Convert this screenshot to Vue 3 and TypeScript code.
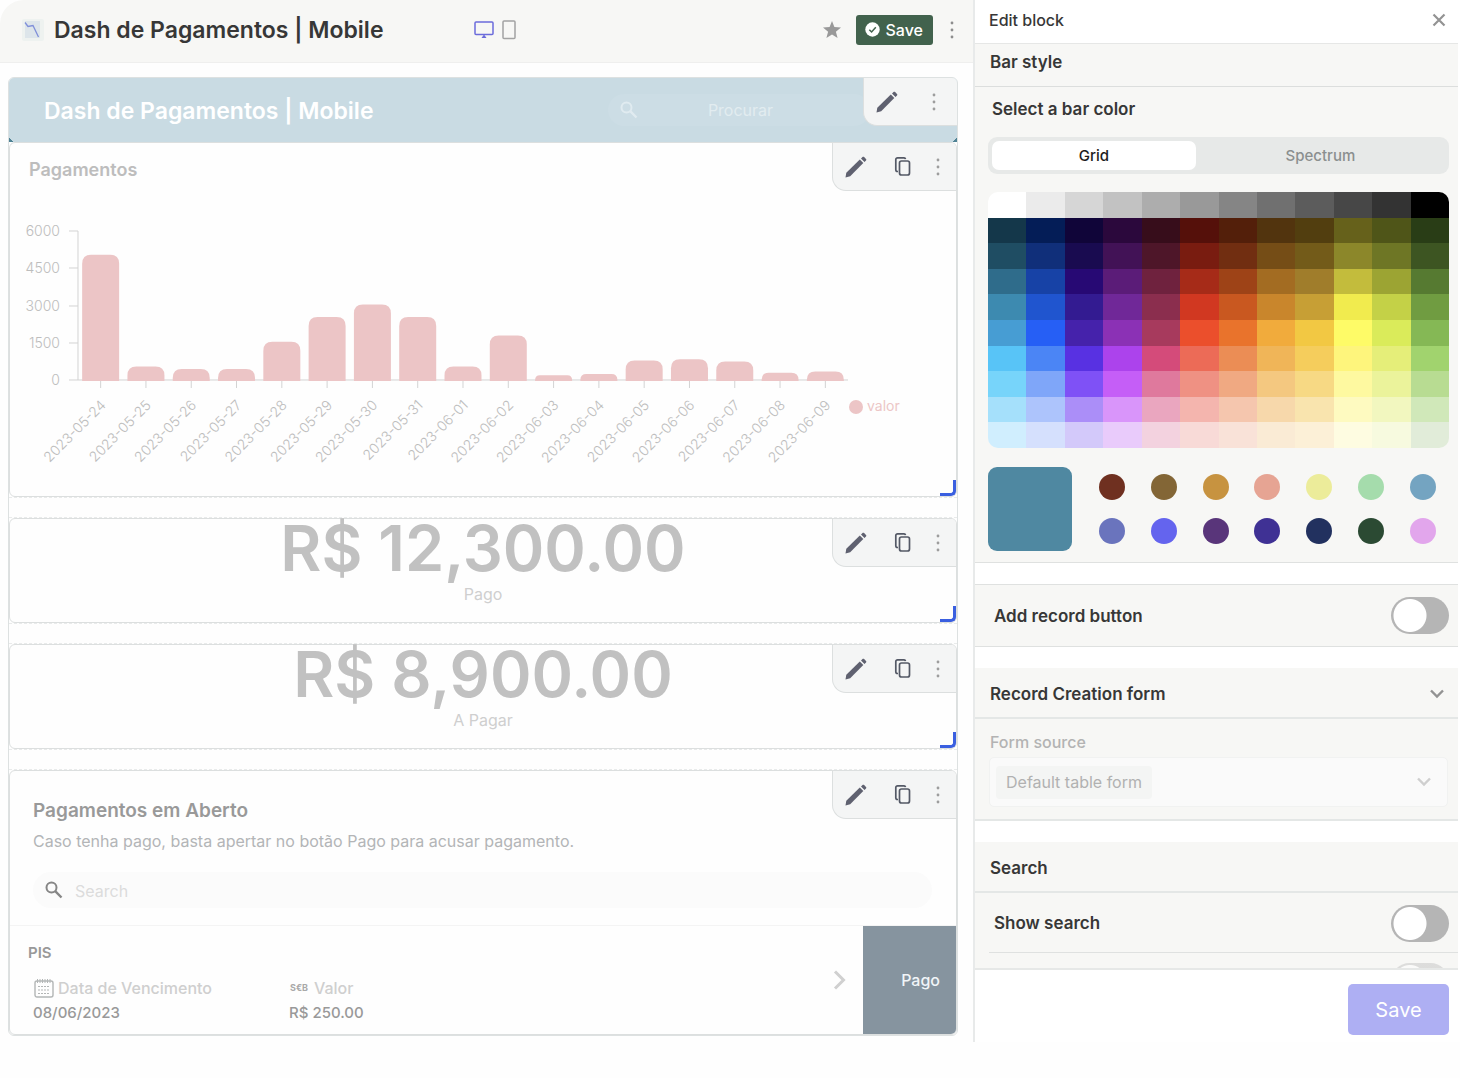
<script setup lang="ts">
import { computed, ref } from 'vue'

type PickerMode = 'Grid' | 'Spectrum'

interface Point {
  label: string
  value: number
}

const mode = ref<PickerMode>('Grid')
const modes: PickerMode[] = ['Grid', 'Spectrum']
const barColor = ref('#4f88a1')
const addRecord = ref(false)
const showSearch = ref(false)
const searchFilter = ref(false)

const palette: string[][] = [
  ['#ffffff', '#ebebeb', '#d6d6d6', '#c2c2c2', '#adadad', '#999999', '#858585', '#707070', '#5c5c5c', '#474747', '#333333', '#000000'],
  ['#14374a', '#041d57', '#100539', '#2b083c', '#370d1b', '#55100a', '#531f0a', '#52340e', '#523e0f', '#66611b', '#4f5518', '#293d16'],
  ['#1f4d63', '#102f7a', '#190b50', '#421256', '#4e1629', '#791c10', '#712e11', '#754d16', '#735b19', '#8c872a', '#6e7625', '#3d5522'],
  ['#2f6c8b', '#1742a6', '#270974', '#5b1c78', '#6f223e', '#a62b18', '#9e4317', '#a36c22', '#a07d2b', '#c3bc3c', '#9ca433', '#567a31'],
  ['#3d8ab0', '#2055cf', '#331b91', '#702898', '#8b2e4e', '#d13821', '#c95820', '#c9862c', '#c79f35', '#f1eb4e', '#c4d147', '#709c41'],
  ['#479dd3', '#265ff5', '#4522ab', '#8b31b5', '#a73a5d', '#eb4f2c', '#e9732c', '#f1ab3c', '#f2c843', '#fefb67', '#daeb5a', '#85b855'],
  ['#58c4f7', '#4b85f5', '#5831e2', '#ac43ec', '#d44b7a', '#ec6b57', '#eb8d55', '#f0b558', '#f5cd5c', '#fef57c', '#e5ee79', '#a1d36e'],
  ['#77d4fa', '#7fa6f9', '#7f51f6', '#c55ef7', '#df799d', '#ef9183', '#f0a982', '#f4c880', '#f7d984', '#fef9a0', '#ebf39b', '#b8dc92'],
  ['#a5e0fb', '#adc4fc', '#ab8ef8', '#d995fa', '#eaa6bf', '#f4b5ae', '#f5c6ae', '#f7d8ab', '#f9e4ae', '#fefac0', '#f2f7bf', '#d0e8b9'],
  ['#d0eefe', '#d5e0fd', '#d3c9fa', '#e9cbfb', '#f3d2df', '#f8dad7', '#f9e2d8', '#faebd5', '#fcf0d7', '#fefce1', '#f7fadf', '#e1ecd9'],
]

const presets = [
  '#6f3020', '#836636', '#c79340', '#e6a493', '#ecec9a', '#a5dcac', '#74a4c1',
  '#6a74bd', '#6464ee', '#59357a', '#3f3194', '#22315f', '#2b4a33', '#e2a6ec',
]

const points: Point[] = [
  { label: '2023-05-24', value: 5000 },
  { label: '2023-05-25', value: 500 },
  { label: '2023-05-26', value: 400 },
  { label: '2023-05-27', value: 400 },
  { label: '2023-05-28', value: 1500 },
  { label: '2023-05-29', value: 2500 },
  { label: '2023-05-30', value: 3000 },
  { label: '2023-05-31', value: 2500 },
  { label: '2023-06-01', value: 500 },
  { label: '2023-06-02', value: 1750 },
  { label: '2023-06-03', value: 150 },
  { label: '2023-06-04', value: 200 },
  { label: '2023-06-05', value: 750 },
  { label: '2023-06-06', value: 800 },
  { label: '2023-06-07', value: 700 },
  { label: '2023-06-08', value: 250 },
  { label: '2023-06-09', value: 300 },
]

const plot = { left: 68, right: 838, top: 31, bottom: 180, max: 6000, barWidth: 37 }

const toY = (value: number): number =>
  plot.bottom - (value / plot.max) * (plot.bottom - plot.top)

const ticks = [6000, 4500, 3000, 1500, 0].map((value) => ({ value, y: Math.round(toY(value)) }))

const bars = computed(() => {
  const step = (plot.right - plot.left) / points.length
  return points.map((point, i) => {
    const center = plot.left + step * (i + 0.5)
    const x = center - plot.barWidth / 2
    const y = toY(point.value) - 1
    const r = Math.min(9, plot.bottom - y)
    const w = plot.barWidth
    const d = `M${x} ${plot.bottom + 1}V${y + r}Q${x} ${y} ${x + r} ${y}H${x + w - r}Q${x + w} ${y} ${x + w} ${y + r}V${plot.bottom + 1}Z`
    return { label: point.label, center, d }
  })
})

const totals = [
  { amount: 'R$ 12,300.00', caption: 'Pago' },
  { amount: 'R$ 8,900.00', caption: 'A Pagar' },
]
</script>

<template>
  <svg class="symbols" aria-hidden="true">
    <symbol id="pencil" viewBox="0 0 24 24">
      <path d="M1.500 22.500l.8-4.800L15.800 4.600l3.500 3.500L6.200 21.300z" />
      <path d="M17 3.500l1.500-1.500c.5-.5 1.100-.5 1.600 0l1.900 1.900c.5.5.5 1.100 0 1.600L20.500 7z" />
    </symbol>
    <symbol id="copy" viewBox="0 0 20 22">
      <rect x="6.500" y="5" width="10" height="14" rx="2" fill="none" stroke="currentColor" stroke-width="1.700" />
      <path d="M5 15.500H4.500A1.700 1.700 0 0 1 2.800 13.800V3.500A1.700 1.700 0 0 1 4.500 1.800h6.500A1.700 1.700 0 0 1 12.500 3.200" fill="none" stroke="currentColor" stroke-width="1.700" />
    </symbol>
    <symbol id="dots" viewBox="0 0 4 18">
      <circle cx="2" cy="2" r="1.400" /><circle cx="2" cy="9" r="1.400" /><circle cx="2" cy="16" r="1.400" />
    </symbol>
    <symbol id="magnifier" viewBox="0 0 18 18">
      <circle cx="6.500" cy="6.500" r="5" fill="none" stroke="currentColor" stroke-width="2" />
      <path d="M10.200 10.200L16.500 16.500" stroke="currentColor" stroke-width="2.400" />
    </symbol>
    <symbol id="chevron" viewBox="0 0 14 10">
      <path d="M1 1.500l6 6 6-6" fill="none" stroke="currentColor" stroke-width="2.400" />
    </symbol>
  </svg>

  <div class="app">
    <main class="main">
      <header class="topbar">
        <svg class="logo" width="22" height="22" viewBox="0 0 22 22" aria-hidden="true">
          <rect width="22" height="22" rx="2" fill="#eef2f0" />
          <rect x="3" y="2" width="15" height="17" fill="#dde5ea" />
          <path d="M3 3.500l3 4 5-1 5.500 11.500" fill="none" stroke="#7f8fd9" stroke-width="1.300" />
        </svg>
        <h1>Dash de Pagamentos | Mobile</h1>
        <div class="devices">
          <button type="button" aria-label="Desktop view">
            <svg width="20" height="18" viewBox="0 0 20 18">
              <rect x="1" y="1" width="18" height="12.500" rx="1" fill="none" stroke="#6c6cdb" stroke-width="1.500" />
              <path d="M10 13.500l2.500 3.500h-5z" fill="#6c6cdb" />
            </svg>
          </button>
          <button type="button" aria-label="Mobile view">
            <svg width="14" height="20" viewBox="0 0 14 20">
              <rect x="1" y="1" width="12" height="17.500" rx="1" fill="none" stroke="#a3a3a3" stroke-width="1.500" />
            </svg>
          </button>
        </div>
        <div class="actions">
          <button type="button" aria-label="Favorite">
            <svg width="20" height="20" viewBox="0 0 20 20" fill="#999">
              <path d="M10 1l2.400 6.100 6.600.4-5.100 4.200 1.700 6.400L10 14.500l-5.600 3.600 1.700-6.400L1 7.500l6.600-.4z" />
            </svg>
          </button>
          <button type="button" class="save">
            <svg width="15" height="15" viewBox="0 0 15 15">
              <circle cx="7.500" cy="7.500" r="7.200" fill="#fff" />
              <path d="M4.300 7.700l2.300 2.300 4.200-4.700" fill="none" stroke="#42624d" stroke-width="1.500" />
            </svg>
            Save
          </button>
          <button type="button" class="more" aria-label="More options">
            <svg width="4" height="18" fill="#8d8d8d"><use href="#dots" /></svg>
          </button>
        </div>
      </header>

      <div class="frame">
        <section class="banner">
          <h2>Dash de Pagamentos | Mobile</h2>
          <label class="banner-search">
            <svg width="18" height="18"><use href="#magnifier" /></svg>
            <input type="search" placeholder="Procurar" aria-label="Procurar" />
          </label>
          <div class="tools tools-short">
            <button type="button" aria-label="Edit"><svg width="24" height="24"><use href="#pencil" /></svg></button>
            <button type="button" class="more" aria-label="More"><svg width="4" height="18"><use href="#dots" /></svg></button>
          </div>
        </section>

        <section class="card chart-card">
          <h3>Pagamentos</h3>
          <svg class="chart" viewBox="0 0 946 290" role="img" aria-label="Pagamentos">
            <path class="axis" :d="`M${plot.left} ${plot.top}V${plot.bottom}H${plot.right}`" />
            <g v-for="tick in ticks" :key="tick.value">
              <path class="axis" :d="`M59 ${tick.y}H${plot.left}`" />
              <text x="50" :y="tick.y + 5" text-anchor="end">{{ tick.value }}</text>
            </g>
            <g v-for="bar in bars" :key="bar.label">
              <path class="bar" :d="bar.d" />
              <path class="axis" :d="`M${bar.center} 181V188`" />
              <text text-anchor="end" :transform="`translate(${bar.center + 6} 206) rotate(-45)`">{{ bar.label }}</text>
            </g>
            <circle class="bar" cx="846" cy="207" r="7" />
            <text class="legend" x="857" y="211">valor</text>
          </svg>
          <div class="tools">
            <button type="button" aria-label="Edit"><svg width="24" height="24"><use href="#pencil" /></svg></button>
            <button type="button" aria-label="Duplicate"><svg width="20" height="22"><use href="#copy" /></svg></button>
            <button type="button" class="more" aria-label="More"><svg width="4" height="18"><use href="#dots" /></svg></button>
          </div>
          <span class="resize"></span>
        </section>

        <template v-for="total in totals" :key="total.caption">
          <div class="gap"></div>
          <section class="card total">
            <strong>{{ total.amount }}</strong>
            <span class="caption">{{ total.caption }}</span>
            <div class="tools">
              <button type="button" aria-label="Edit"><svg width="24" height="24"><use href="#pencil" /></svg></button>
              <button type="button" aria-label="Duplicate"><svg width="20" height="22"><use href="#copy" /></svg></button>
              <button type="button" class="more" aria-label="More"><svg width="4" height="18"><use href="#dots" /></svg></button>
            </div>
            <span class="resize"></span>
          </section>
        </template>

        <div class="gap"></div>
        <section class="card list">
          <div class="list-head">
            <h3>Pagamentos em Aberto</h3>
            <p>Caso tenha pago, basta apertar no botão Pago para acusar pagamento.</p>
            <label class="list-search">
              <svg width="18" height="18"><use href="#magnifier" /></svg>
              <input type="search" placeholder="Search" aria-label="Search" />
            </label>
          </div>
          <div class="record">
            <div class="record-body">
              <h4>PIS</h4>
              <dl>
                <div>
                  <dt>
                    <svg width="20" height="20" viewBox="0 0 20 20" fill="none" stroke="#b3b6b6">
                      <rect x="1" y="3" width="18" height="16" rx="2" stroke-width="1.400" />
                      <path d="M3.500 1v4M6 1v4M8.500 1v4M11 1v4M13.500 1v4M16 1v4" />
                      <path d="M4 8.500h12M4 12h12M4 15.500h12" stroke-dasharray="2 1" />
                    </svg>
                    Data de Vencimento
                  </dt>
                  <dd>08/06/2023</dd>
                </div>
                <div>
                  <dt><span class="money">S€B</span>Valor</dt>
                  <dd>R$ 250.00</dd>
                </div>
              </dl>
            </div>
            <svg class="open" width="14" height="20" viewBox="0 0 14 20" aria-hidden="true">
              <path d="M2 1.500l8.500 8.500L2 18.500" fill="none" stroke="#d0d0d0" stroke-width="3" />
            </svg>
            <button type="button" class="paid">Pago</button>
          </div>
          <div class="tools">
            <button type="button" aria-label="Edit"><svg width="24" height="24"><use href="#pencil" /></svg></button>
            <button type="button" aria-label="Duplicate"><svg width="20" height="22"><use href="#copy" /></svg></button>
            <button type="button" class="more" aria-label="More"><svg width="4" height="18"><use href="#dots" /></svg></button>
          </div>
        </section>
      </div>
    </main>

    <aside class="panel">
      <header class="panel-title">
        <h2>Edit block</h2>
        <button type="button" aria-label="Close">
          <svg width="14" height="14" viewBox="0 0 14 14">
            <path d="M1.500 1.500l11 11M12.500 1.500l-11 11" stroke="#939393" stroke-width="2.200" />
          </svg>
        </button>
      </header>
      <div class="panel-body">
        <h3 class="section-head first">Bar style</h3>
        <div class="picker">
          <h4>Select a bar color</h4>
          <div class="segmented">
            <button
              v-for="name in modes"
              :key="name"
              type="button"
              :class="{ active: mode === name }"
              :aria-pressed="mode === name"
              @click="mode = name"
            >{{ name }}</button>
          </div>
          <div class="palette">
            <template v-for="(row, r) in palette" :key="r">
              <button
                v-for="color in row"
                :key="color"
                type="button"
                :aria-label="color"
                :style="{ background: color }"
                @click="barColor = color"
              ></button>
            </template>
          </div>
          <div class="chosen">
            <div class="current" :style="{ background: barColor }"></div>
            <div class="presets">
              <button
                v-for="color in presets"
                :key="color"
                type="button"
                :aria-label="color"
                :style="{ background: color }"
                @click="barColor = color"
              ></button>
            </div>
          </div>
        </div>

        <label class="switch-row boxed">
          Add record button
          <input v-model="addRecord" type="checkbox" role="switch" />
        </label>

        <h3 class="section-head">
          Record Creation form
          <svg width="14" height="10"><use href="#chevron" /></svg>
        </h3>
        <div class="form-source">
          <label for="source">Form source</label>
          <div class="select-box">
            <select id="source"><option>Default table form</option></select>
            <svg width="14" height="10"><use href="#chevron" /></svg>
          </div>
        </div>

        <h3 class="section-head">Search</h3>
        <label class="switch-row inset">
          Show search
          <input v-model="showSearch" type="checkbox" role="switch" />
        </label>
        <div class="clipped">
          <input v-model="searchFilter" type="checkbox" role="switch" aria-label="Search filter" disabled />
        </div>
      </div>
      <footer>
        <button type="button">Save</button>
      </footer>
    </aside>
  </div>
</template>

<style>
body {
  background: #fefefe;
}
</style>

<style scoped>
.symbols {
  position: absolute;
  width: 0;
  height: 0;
}

.app {
  display: grid;
  grid-template-columns: minmax(0, 1fr) 487px;
  align-items: start;
  font-family: Inter, "Liberation Sans", sans-serif;
  font-size: 16px;
  color: #373737;
}

.app *,
.app {
  box-sizing: border-box;
}

h1, h2, h3, h4, p, dl, dd {
  margin: 0;
}

button {
  padding: 0;
  border: 0;
  background: none;
  font: inherit;
  color: inherit;
  cursor: pointer;
}

button svg {
  display: block;
}

input,
select {
  font: inherit;
  border: 0;
  background: none;
  outline: 0;
}

.topbar {
  display: flex;
  align-items: center;
  height: 63px;
  padding: 0 18px 3px 22px;
  background: #f7f7f5;
  border-bottom: 1px solid #efefee;
  border-top-left-radius: 24px;
}

h1 {
  margin-left: 10px;
  font-size: 23px;
  line-height: 32px;
  font-weight: 600;
  white-space: nowrap;
}

.devices {
  display: flex;
  align-items: center;
  gap: 8px;
  margin-left: 91px;
}

.actions {
  display: flex;
  align-items: center;
  gap: 14px;
  margin-left: auto;
}

.save {
  display: flex;
  align-items: center;
  gap: 6px;
  height: 30px;
  padding: 0 10px 0 9px;
  border-radius: 3px;
  background: #42624d;
  color: #fff;
  font-weight: 500;
}

.actions .more {
  padding: 0 1px 0 3px;
}

.frame {
  margin: 14px 15px 0 8px;
  border: 1px solid #dde1e1;
  border-radius: 6px;
  background: #fefefe;
}

.banner {
  position: relative;
  display: flex;
  align-items: center;
  justify-content: space-between;
  height: 64px;
  padding: 0 87px 0 35px;
  background:
    linear-gradient(45deg, #4f8294 3px, transparent 3px),
    linear-gradient(-45deg, #4f8294 3px, transparent 3px),
    #c9dbe3;
  border-radius: 5px 5px 0 0;
}

.banner h2 {
  padding-top: 2px;
  font-size: 23px;
  line-height: 32px;
  font-weight: 600;
  color: #fff;
  white-space: nowrap;
}

.banner-search {
  display: flex;
  align-items: center;
  width: 262px;
  height: 32px;
  padding: 0 12px;
  border-radius: 16px;
  background: #ccdde5;
  color: #e0ebf0;
}

.banner-search input {
  flex: 1;
  min-width: 0;
  text-align: center;
}

.banner-search input::placeholder {
  color: #e2ecf0;
}

.tools {
  position: absolute;
  top: 0;
  right: 0;
  display: flex;
  align-items: center;
  width: 124px;
  height: 48px;
  padding-left: 11px;
  gap: 25px;
  background: #f4f5f5;
  border: solid #dcdfdf;
  border-width: 0 0 1px 1px;
  border-bottom-left-radius: 14px;
  border-top-right-radius: 5px;
  color: #545966;
  fill: #5f6170;
}

.tools .more {
  margin-left: -2px;
  fill: #9d9d9d;
}

.tools-short {
  width: 94px;
  gap: 35px;
}

.card {
  position: relative;
  border: 1px solid #dcdfdf;
  border-radius: 6px;
}

.resize {
  position: absolute;
  right: 0;
  bottom: 0;
  width: 16px;
  height: 16px;
  border: solid #3a5fe0;
  border-width: 0 3px 3px 0;
  border-bottom-right-radius: 5px;
}

.gap {
  height: 21px;
  border: dashed #e9ebeb;
  border-width: 1px 0;
}

.chart-card {
  height: 355px;
  padding: 15px 0 0;
}

.chart-card h3 {
  padding-left: 19px;
  font-size: 18px;
  line-height: 24px;
  font-weight: 600;
  color: #bdbdbd;
}

.chart {
  display: block;
  width: 100%;
  max-width: 946px;
  margin-top: 18px;
}

.chart text {
  font-size: 14px;
  font-weight: 300;
  fill: #bdbdbd;
}

.chart .legend {
  font-weight: 400;
  fill: #ecc6c6;
}

.chart .axis {
  fill: none;
  stroke: #d3d3d3;
  stroke-width: 1;
}

.chart .bar {
  fill: #ecc5c6;
}

.total {
  display: flex;
  flex-direction: column;
  align-items: center;
  height: 105px;
}

.total strong {
  font-size: 63px;
  line-height: 58px;
  font-weight: 600;
  color: #c1c1c1;
}

.caption {
  margin-top: 5px;
  line-height: 24px;
  color: #cfcfcf;
}

.list-head {
  padding: 27px 24px 17px 23px;
  border-bottom: 1px solid #f4f4f4;
}

.list-head h3 {
  font-size: 19px;
  line-height: 26px;
  font-weight: 600;
  color: #999;
}

.list-head p {
  margin-top: 4px;
  line-height: 26px;
  color: #b3b5b7;
}

.list-search {
  display: flex;
  align-items: center;
  gap: 12px;
  height: 36px;
  margin-top: 18px;
  padding: 0 12px;
  border-radius: 18px;
  background: #fbfbfb;
  color: #868686;
}

.list-search input {
  flex: 1;
  padding: 2px 0 0;
}

.list-search input::placeholder {
  color: #dcdcdc;
}

.record {
  display: flex;
  align-items: center;
  height: 108px;
}

.record-body {
  flex: 1;
  padding-top: 8px;
}

.record h4 {
  padding-left: 18px;
  font-size: 15px;
  line-height: 20px;
  font-weight: 600;
  color: #999;
}

dl {
  display: flex;
  margin-top: 13px;
  padding-left: 23px;
}

dl > div {
  width: 256px;
}

dt {
  display: flex;
  align-items: center;
  gap: 4px;
  height: 24px;
  padding-left: 1px;
  font-size: 16px;
  font-weight: 500;
  color: #cfcfcf;
}

dd {
  font-size: 15px;
  line-height: 26px;
  font-weight: 500;
  color: #999;
}

.money {
  width: 20px;
  font-size: 9px;
  font-weight: 700;
  color: #a9a9a9;
}

.open {
  margin-right: 16px;
}

.paid {
  align-self: stretch;
  width: 93px;
  padding: 0 16px 0 0;
  border-bottom-right-radius: 5px;
  background: #86949f;
  color: #f1f5f8;
  font-weight: 500;
  text-align: right;
}

.panel {
  display: flex;
  flex-direction: column;
  height: 1042px;
  padding-right: 2px;
  border-left: 2px solid #e8eaea;
  background: #fff;
}

.panel-title {
  display: flex;
  align-items: center;
  justify-content: space-between;
  height: 44px;
  padding: 0 12px 3px 14px;
  border-bottom: 1px solid #e6e7e6;
}

.panel-title h2 {
  font-size: 16px;
  font-weight: 500;
}

.panel-body {
  flex: 1;
  overflow: hidden;
}

.section-head {
  display: flex;
  align-items: center;
  justify-content: space-between;
  height: 51px;
  margin-top: 21px;
  padding: 2px 14px 0 15px;
  background: #f7f7f5;
  border-bottom: 2px solid #e4e7e6;
  font-size: 17px;
  font-weight: 600;
}

.section-head.first {
  height: 43px;
  margin-top: 0;
  padding: 0 14px 6px 15px;
  border-bottom: 1px solid #dcdedd;
}

.section-head svg {
  color: #929292;
}

.picker {
  padding: 8px 9px 11px 13px;
  background: #f7f7f5;
  border-bottom: 1px solid #dfe1e0;
}

.picker h4 {
  padding-left: 4px;
  font-size: 17px;
  line-height: 28px;
  font-weight: 600;
}

.segmented {
  display: flex;
  height: 37px;
  margin-top: 14px;
  padding: 4px;
  border-radius: 9px;
  background: #e7e9e8;
}

.segmented button {
  flex: 11;
  border-radius: 7px;
  font-size: 15px;
  font-weight: 500;
  color: #8b8f8f;
}

.segmented button:first-child {
  flex: 9;
}

.segmented .active {
  background: #fff;
  color: #1d1d1d;
}

.palette {
  display: grid;
  grid-template-columns: repeat(12, 1fr);
  grid-template-rows: repeat(10, 1fr);
  height: 256px;
  margin-top: 18px;
  border-radius: 10px;
  overflow: hidden;
}

.chosen {
  display: flex;
  gap: 27px;
  margin-top: 19px;
}

.current {
  width: 84px;
  height: 84px;
  border-radius: 9px;
}

.presets {
  flex: 1;
  display: grid;
  grid-template-columns: repeat(7, 26px);
  justify-content: space-between;
  align-content: center;
  row-gap: 18px;
  padding-right: 13px;
}

.presets button {
  height: 26px;
  border-radius: 50%;
}

.switch-row {
  display: flex;
  align-items: center;
  justify-content: space-between;
  height: 60px;
  padding: 0 9px 0 19px;
  background: #f7f7f5;
  font-size: 17px;
  font-weight: 600;
}

.switch-row.boxed {
  height: 63px;
  margin-top: 21px;
  border: solid #dfe1e0;
  border-width: 1px 0;
}

.switch-row.inset {
  background:
    linear-gradient(#dfe1e0, #dfe1e0) 14px 100% / 100% 1px no-repeat,
    #f7f7f5;
}

input[role="switch"] {
  appearance: none;
  width: 58px;
  height: 37px;
  margin: 0;
  border-radius: 19px;
  background: radial-gradient(circle at 19px 50%, #fff 16px, #b5b5b5 17px);
}

input[role="switch"]:checked {
  background: radial-gradient(circle at 39px 50%, #fff 16px, #6464ee 17px);
}

.form-source {
  height: 102px;
  padding: 12px 10px 0 14px;
  background: #f7f7f5;
  border-bottom: 2px solid #e4e7e6;
}

.form-source label {
  display: block;
  padding-left: 1px;
  font-size: 16px;
  line-height: 22px;
  font-weight: 500;
  color: #b3b3b3;
}

.select-box {
  display: flex;
  align-items: center;
  justify-content: space-between;
  height: 50px;
  margin-top: 4px;
  padding: 0 16px 0 6px;
  border: 1px solid #f1f2f1;
  border-radius: 5px;
  background: #fafafa;
  color: #cfcfcf;
}

select {
  appearance: none;
  height: 33px;
  padding: 0 10px;
  border-radius: 4px;
  background: #f4f5f4;
  color: #b1b1b1;
}

.clipped {
  display: flex;
  justify-content: flex-end;
  align-items: flex-start;
  height: 48px;
  padding: 10px 9px 0 0;
  background: #f7f7f5;
}

.clipped input {
  opacity: 0.4;
}

.panel footer {
  display: flex;
  justify-content: flex-end;
  padding: 14px 9px 7px;
  border-top: 2px solid #e6e8e7;
}

.panel footer button {
  width: 101px;
  height: 51px;
  border-radius: 5px;
  background: #aeaff3;
  color: #fff;
  font-size: 20px;
}
</style>
